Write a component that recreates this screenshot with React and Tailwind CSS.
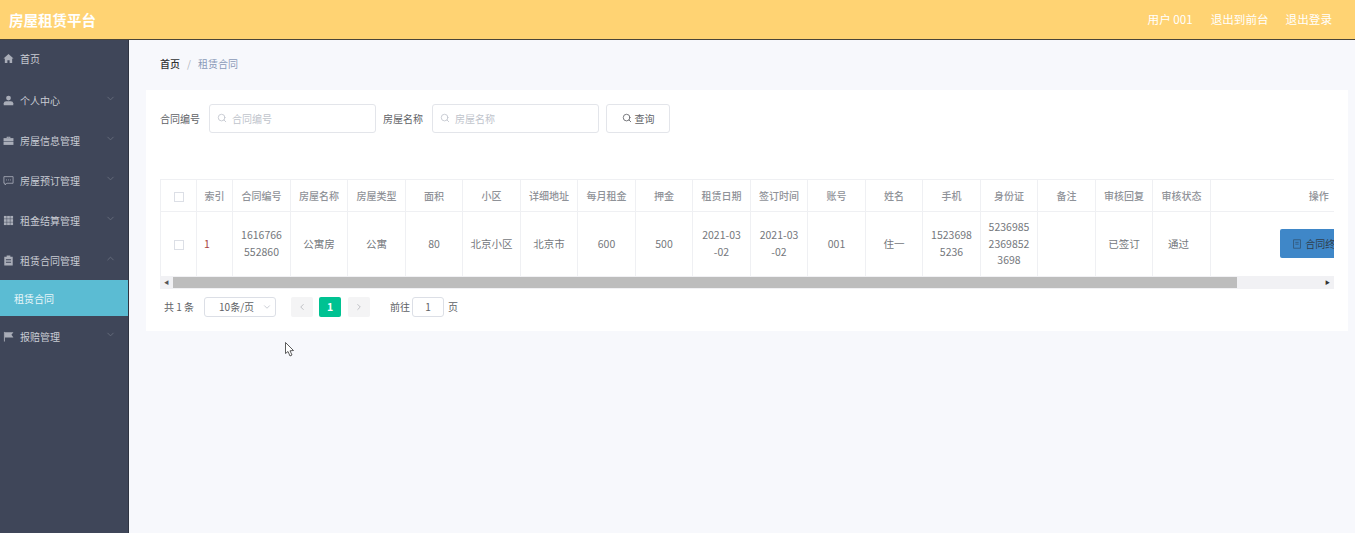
import React from 'react';
import { ChevronDown, ChevronUp, ChevronLeft, ChevronRight, Search } from 'lucide-react';

const HomeIcon = (p) => (
  <svg viewBox="0 0 12 12" fill="currentColor" {...p}><path d="M6 1 L11.5 6 L10 6 L10 11 L7.2 11 L7.2 7.8 L4.8 7.8 L4.8 11 L2 11 L2 6 L0.5 6 Z" /></svg>
);
const UserIcon = (p) => (
  <svg viewBox="0 0 12 12" fill="currentColor" {...p}><circle cx="6" cy="3.4" r="2.6" /><path d="M0.8 11.2 L0.8 9 Q1 7 3.4 6.8 L8.6 6.8 Q11 7 11.2 9 L11.2 11.2 Z" /></svg>
);
const CaseIcon = (p) => (
  <svg viewBox="0 0 12 12" fill="currentColor" {...p}><path d="M4 2 L8 2 L8 3.4 L7 3.4 L7 3 L5 3 L5 3.4 L4 3.4 Z" /><rect x="0.6" y="3.4" width="10.8" height="3.2" /><rect x="0.6" y="7.2" width="10.8" height="3.6" /></svg>
);
const ChatIcon = (p) => (
  <svg viewBox="0 0 12 12" fill="none" stroke="currentColor" strokeWidth="0.9" {...p}><path d="M1 1.8 L11 1.8 L11 9 L4.2 9 L2.2 10.8 L2.2 9 L1 9 Z" /><path d="M3.4 5.4 L4.4 5.4 M5.5 5.4 L6.5 5.4 M7.6 5.4 L8.6 5.4" /></svg>
);
const GridIcon = (p) => (
  <svg viewBox="0 0 12 12" fill="currentColor" {...p}>
    <rect x="1" y="1" width="3" height="3" /><rect x="4.5" y="1" width="3" height="3" /><rect x="8" y="1" width="3" height="3" />
    <rect x="1" y="4.5" width="3" height="3" /><rect x="4.5" y="4.5" width="3" height="3" /><rect x="8" y="4.5" width="3" height="3" />
    <rect x="1" y="8" width="3" height="3" /><rect x="4.5" y="8" width="3" height="3" /><rect x="8" y="8" width="3" height="3" />
  </svg>
);
const ClipIcon = (p) => (
  <svg viewBox="0 0 12 12" fill="currentColor" {...p}><path d="M4 0.6 L8 0.6 L8 2 L10.6 2 L10.6 11.4 L1.4 11.4 L1.4 2 L4 2 Z M3.2 4.6 L3.2 5.6 L8.8 5.6 L8.8 4.6 Z M3.2 7.4 L3.2 8.4 L8.8 8.4 L8.8 7.4 Z" fillRule="evenodd" /></svg>
);
const FlagIcon = (p) => (
  <svg viewBox="0 0 12 12" fill="currentColor" {...p}><rect x="1" y="1" width="1" height="10.5" /><path d="M2 1.4 L11.4 1.4 L9.2 4.2 L11.4 7 L2 7 Z" /></svg>
);
const DocIcon = (p) => (
  <svg viewBox="0 0 12 12" fill="none" stroke="currentColor" strokeWidth="0.9" {...p}><rect x="2" y="1" width="8" height="10" /><path d="M4 4 L8 4 M4 6.2 L8 6.2" /></svg>
);

const menu = [
  { label: '个人中心', icon: UserIcon },
  { label: '房屋信息管理', icon: CaseIcon },
  { label: '房屋预订管理', icon: ChatIcon },
  { label: '租金结算管理', icon: GridIcon },
];

const columns = [
  { title: '索引', value: '1', width: 'w-[36px]', extra: 'text-left text-[#a94442]' },
  { title: '合同编号', value: '1616766552860', width: 'w-[58px]' },
  { title: '房屋名称', value: '公寓房', width: 'w-[57px]' },
  { title: '房屋类型', value: '公寓', width: 'w-[58px]' },
  { title: '面积', value: '80', width: 'w-[57px]' },
  { title: '小区', value: '北京小区', width: 'w-[58px]' },
  { title: '详细地址', value: '北京市', width: 'w-[57px]' },
  { title: '每月租金', value: '600', width: 'w-[58px]' },
  { title: '押金', value: '500', width: 'w-[57px]' },
  { title: '租赁日期', value: '2021-03-02', width: 'w-[58px]', extra: 'px-[8px]' },
  { title: '签订时间', value: '2021-03-02', width: 'w-[57px]' },
  { title: '账号', value: '001', width: 'w-[58px]' },
  { title: '姓名', value: '住一', width: 'w-[57px]' },
  { title: '手机', value: '15236985236', width: 'w-[58px]' },
  { title: '身份证', value: '523698523698523698', width: 'w-[57px]' },
  { title: '备注', value: '', width: 'w-[58px]' },
  { title: '审核回复', value: '已签订', width: 'w-[57px]' },
  { title: '审核状态', value: '通过', width: 'w-[58px]', extra: 'pr-[13px]' },
];

function MenuItem({ icon: Icon, label, open, hasArrow = true, first }) {
  return (
    <div className={`flex h-10 items-center pl-[3px] pr-[12px] text-[10px] text-[#c9ccd4] ${first ? 'pb-[3px]' : ''}`}>
      <Icon className="mr-[6px] h-[11px] w-[11px] shrink-0 text-[#a9adb8]" />
      <span className="flex-1">{label}</span>
      {hasArrow && (open
        ? <ChevronUp className="mb-[4px] h-[11px] w-[11px] text-[#666c7c]" />
        : <ChevronDown className="mb-[4px] h-[11px] w-[11px] text-[#666c7c]" />)}
    </div>
  );
}

function SearchBox({ placeholder }) {
  return (
    <div className="flex h-[29px] w-[167px] items-center rounded-[3px] border border-[#e3e5ea] bg-white pb-[1px] pl-[7px] text-[10px] text-[#c0c4cc]">
      <Search className="mr-[5px] h-[10px] w-[10px]" />
      {placeholder}
    </div>
  );
}

export default function App() {
  return (
    <div className="flex h-screen flex-col overflow-hidden bg-[#f7f8fc] font-['Noto_Sans_CJK_SC','Noto_Sans',sans-serif]">
      <header className="flex h-10 shrink-0 items-center justify-between border-b border-[#4a4438] bg-[#ffd373] pl-[9px] pr-[23px] text-white">
        <div className="text-[14.5px] font-bold">房屋租赁平台</div>
        <div className="flex items-center text-[11.6px]">
          <span className="mr-[18px]">用户 001</span>
          <span className="mr-[17px]">退出到前台</span>
          <span>退出登录</span>
        </div>
      </header>

      <div className="flex min-h-0 flex-1">
        <aside className="w-[129px] shrink-0 border-r border-[#2f3442] bg-[#3f4659]">
          <MenuItem icon={HomeIcon} label="首页" hasArrow={false} first />
          {menu.map((m) => <MenuItem key={m.label} icon={m.icon} label={m.label} />)}
          <MenuItem icon={ClipIcon} label="租赁合同管理" open />
          <div className="flex h-9 items-center bg-[#5bbcd3] pl-[14px] text-[10px] text-[#e8f6f9]">租赁合同</div>
          <MenuItem icon={FlagIcon} label="报赔管理" />
        </aside>

        <main className="relative min-w-0 flex-1 pl-[17px] pr-[7px]">
          <div className="flex h-[50px] items-center pb-[4px] pl-[14px] text-[10px]">
            <span className="font-medium text-[#303133]">首页</span>
            <span className="mx-[7px] text-[#b0b4bc]">/</span>
            <span className="text-[#8a9ab8]">租赁合同</span>
          </div>

          <section className="h-[241px] bg-white px-[14px] pt-[14px]">
            <div className="flex items-center text-[10px] text-[#606266]">
              <span className="mr-[9px] pb-[1px]">合同编号</span>
              <SearchBox placeholder="合同编号" />
              <span className="ml-[7px] mr-[9px] pb-[1px]">房屋名称</span>
              <SearchBox placeholder="房屋名称" />
              <button className="ml-[7px] flex h-[29px] w-[64px] items-center justify-center rounded-[3px] border border-[#e3e5ea] bg-white pb-[1px] text-[10px] text-[#606266]">
                <Search className="mr-[3px] h-[10px] w-[10px]" />
                查询
              </button>
            </div>

            <div className="mt-[46px] overflow-hidden">
              <table className="w-[1266px] table-fixed border-collapse text-center">
                <colgroup>
                  <col className="w-[36px]" />
                  {columns.map((c) => <col key={c.title} className={c.width} />)}
                  <col className="w-[216px]" />
                </colgroup>
                <thead>
                  <tr className="h-[32px] border-y border-[#eff0f3] text-[10px] font-medium text-[#8f9298]">
                    <th className="border-x border-[#eff0f3]">
                      <span className="inline-block h-[10px] w-[10px] border border-[#dcdfe6] align-middle" />
                    </th>
                    {columns.map((c) => <th key={c.title} className="border-r border-[#eff0f3] font-medium">{c.title}</th>)}
                    <th className="font-medium">操作</th>
                  </tr>
                </thead>
                <tbody>
                  <tr className="h-[64px] text-[10.5px] leading-[16.5px] text-[#74777c]">
                    <td className="border-x border-[#eff0f3]">
                      <span className="inline-block h-[10px] w-[10px] border border-[#dcdfe6] align-middle" />
                    </td>
                    {columns.map((c) => (
                      <td key={c.title} className={`break-all border-r border-[#eff0f3] px-[7px] ${c.extra || ''}`}>{c.value}</td>
                    ))}
                    <td>
                      <button className="mx-auto flex h-[29px] w-[78px] items-center justify-center rounded-[2px] bg-[#3f87c8] text-[10px] text-[#2f3e4d]">
                        <DocIcon className="mr-[3px] h-[10px] w-[10px] text-[#2f4f6d]" />
                        合同终止
                      </button>
                    </td>
                  </tr>
                </tbody>
              </table>
            </div>

            <div className="flex h-[13px] items-center bg-[#f1f1f4]">
              <span className="flex w-[13px] justify-center text-[5px] text-[#555]">◀</span>
              <div className="h-[11px] w-[1064px] bg-[#bdbdbd]" />
              <span className="ml-auto mr-[4px] text-[5px] text-[#333]">▶</span>
            </div>

            <div className="mt-[8px] flex h-[20px] items-center pl-[4px] text-[10px] text-[#606266]">
              <span className="mr-[10px]">共 1 条</span>
              <div className="flex h-[20px] w-[72px] items-center justify-between rounded-[3px] border border-[#dcdfe6] pl-[14px] pr-[3px]">
                10条/页
                <ChevronDown className="h-[10px] w-[10px] text-[#c0c4cc]" />
              </div>
              <div className="ml-[15px] flex h-[20px] w-[22px] items-center justify-center rounded-[2px] bg-[#f4f4f5] text-[#b4b6bb]">
                <ChevronLeft className="h-[10px] w-[10px]" />
              </div>
              <div className="ml-[6px] flex h-[20px] w-[22px] items-center justify-center rounded-[2px] bg-[#00c292] text-[10.5px] font-bold text-white">1</div>
              <div className="ml-[7px] flex h-[20px] w-[22px] items-center justify-center rounded-[2px] bg-[#f4f4f5] text-[#b4b6bb]">
                <ChevronRight className="h-[10px] w-[10px]" />
              </div>
              <span className="ml-[20px]">前往</span>
              <div className="ml-[2px] flex h-[20px] w-[32px] items-center justify-center rounded-[3px] border border-[#dcdfe6]">1</div>
              <span className="ml-[4px]">页</span>
            </div>
          </section>

          {/* mouse pointer captured in the screenshot */}
          <svg className="absolute left-[156px] top-[302px] h-[15px] w-[10px]" viewBox="0 0 10 15">
            <path d="M0.5 0.5 L0.5 11.5 L3 9.5 L5 14 L7 13 L5 8.8 L8.5 8.5 Z" fill="#fff" stroke="#333" strokeWidth="0.8" />
          </svg>
        </main>
      </div>
    </div>
  );
}
